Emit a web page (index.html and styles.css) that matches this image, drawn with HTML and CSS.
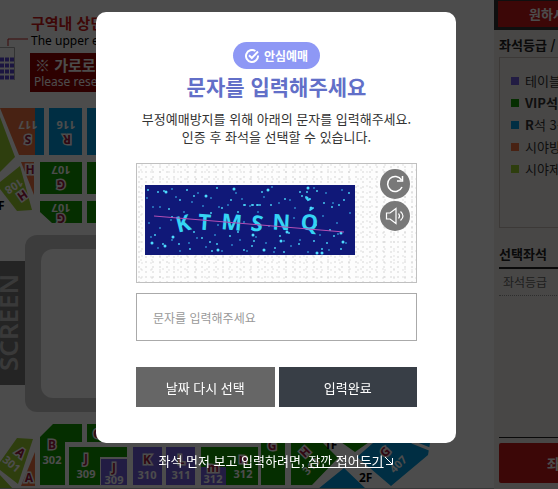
FILE: index.html
```html
<!DOCTYPE html>
<html lang="ko">
<head>
    <meta charset="UTF-8">
    <meta name="viewport" content="width=device-width, initial-scale=1.0">
    <title>좌석 선택</title>

    <link rel="stylesheet" href="styles.css">
</head>
<body>

<div class="booking">
    <!-- Seat map -->
    <main class="seat-map">
        <svg width="494" height="489" viewBox="0 0 494 489" aria-label="좌석 배치도">
            <!-- Top notice -->
            <path d="M8 46V39H28" fill="none" stroke="#c82020"/>
            <path d="M0 47.500H14.500V80" fill="none" stroke="#aaa"/>
            <path d="M0 59.500H15M0 65.500H15M0 71.500H15M0 77.500H15" stroke="#5a48d8" stroke-width="4" stroke-dasharray="4 1"/>
            <text class="notice-title" x="31" y="29">구역내 상단</text>
            <text class="notice-sub" x="31" y="45">The upper end</text>
            <rect x="30" y="53" width="100" height="39" fill="#980000"/>
            <text class="band-title" x="35" y="71">※ 가로로</text>
            <text class="band-sub" x="34" y="86">Please reserve</text>

            <!-- Upper blocks -->
            <path class="lime" d="M0 117L15 157L0 172Z"/>
            <path class="orange" d="M0 108H35V155H19Z"/>
            <path class="blue" d="M35 108H44V155H35ZM49 108H82V155H49ZM87 108H130V155H87Z"/>
            <path class="orange" d="M21 162H34V195Z"/>
            <path class="lime" d="M20 166L32 210L17 211L0 189V182Z"/>
            <path class="green" d="M40 162H82V194H40ZM87 162H130V194H87ZM40 201H82V223H52L40 212ZM87 201H130V223H87Z"/>
            <g class="seat-no">
                <text transform="translate(28 121) rotate(180)">117</text>
                <text transform="translate(66 121) rotate(180)">116</text>
                <text transform="translate(61 166) rotate(180)">107</text>
                <text transform="translate(61 204) rotate(180)">107</text>
                <text transform="translate(12 183) rotate(148)">108</text>
            </g>
            <g class="seat-name">
                <text transform="translate(28 135) rotate(180)">S</text>
                <text transform="translate(67 135) rotate(180)">R</text>
                <text transform="translate(61 180) rotate(180)">G</text>
                <text transform="translate(61 214) rotate(180)">G</text>
                <text x="30" y="174">H</text>
                <text transform="translate(20 192) rotate(145)">H</text>
            </g>
            <text class="floor" x="-2" y="210">F</text>

            <!-- Stage -->
            <rect x="25" y="235" width="420" height="177" rx="12" fill="#cacaca"/>
            <rect x="41" y="249" width="388" height="149" rx="12" fill="#fdfdfd"/>
            <rect x="0" y="261" width="25" height="124" fill="#787878"/>
            <text class="screen" transform="translate(18 371) rotate(-90)">SCREEN</text>

            <!-- Lower blocks -->
            <path class="lime" d="M17 438L33 439L18 484L0 470V462ZM0 475L13 489H0Z"/>
            <path class="orange" d="M35 452V486H21Z"/>
            <path class="green" d="M53 424H82V442H65V485H40V437ZM87 424H130V442H87ZM69 447H127V457H100V485H69ZM201 447H258V485H201ZM261 430H285V485H261ZM291 430H310L338 458L312 485H291ZM338 440H372L355 452Z"/>
            <path class="purple" d="M101 459H127V485H101ZM133 447H162V485H133ZM166 447H195V485H166ZM201 467H226V485H201Z"/>
            <path class="blue" d="M373 443H430L428 455L391 486L357 457ZM318 489L344 468L366 489Z"/>
            <path d="M412 442L432 450" stroke="#fff" stroke-width="3"/>
            <path d="M0 488.500H494" stroke="#bbb"/>
            <g class="seat-no">
                <text transform="translate(9 467) rotate(40)">301</text>
                <text x="52" y="464">302</text>
                <text x="86" y="478">309</text>
                <text x="114" y="484">309</text>
                <text x="147" y="479">310</text>
                <text x="181" y="479">311</text>
                <text x="213" y="483">312</text>
                <text x="243" y="478">312</text>
                <text transform="translate(314 469) rotate(-45)">313</text>
                <text transform="translate(401 467) rotate(-45)">407</text>
            </g>
            <g class="seat-name">
                <text transform="translate(18 456) rotate(40)">A</text>
                <text x="29" y="482">A</text>
                <text x="52" y="449">B</text>
                <text x="97" y="438">C</text>
                <text x="86" y="463">J</text>
                <text x="114" y="472">J</text>
                <text x="147" y="464">K</text>
                <text x="181" y="464">L</text>
                <text x="213" y="472">m</text>
                <text x="243" y="463">n</text>
                <text x="272" y="450">G</text>
                <text transform="translate(308 455) rotate(-45)">H</text>
                <text transform="translate(388 455) rotate(-45)">G</text>
            </g>
            <text class="floor" x="324" y="449">1F</text>
            <text class="floor" x="359" y="482">2F</text>
        </svg>
    </main>

    <!-- Seat grades -->
    <aside class="side">
        <div class="side-top">
            <button class="side-banner" type="button">원하시는 좌석</button>
        </div>
        <div class="side-body">
            <h2 class="side-title">좌석등급 / 잔여석</h2>
            <ul class="grade-list">
                <li><span class="dot dot-purple"></span>테이블석</li>
                <li><span class="dot dot-green"></span><b>VIP석</b></li>
                <li><span class="dot dot-blue"></span><b>R</b>석 3석</li>
                <li><span class="dot dot-orange"></span>시야방해석</li>
                <li><span class="dot dot-lime"></span>시야제한석</li>
            </ul>
            <h2 class="side-title picked-title">선택좌석</h2>
            <div class="picked">
                <p class="picked-head">좌석등급</p>
            </div>
            <button class="side-submit" type="button">좌석선택완료</button>
        </div>
    </aside>
</div>

<div class="overlay">
    <form class="modal">
        <span class="badge">
            <svg width="14" height="14" viewBox="0 0 14 14" fill="none" stroke="#fff" stroke-width="2" aria-hidden="true">
                <path d="M10.400 2A6 6 0 1 0 13 6.500"/>
                <path d="M4 6.200L6.800 9L13 2.500"/>
            </svg>
            안심예매
        </span>
        <h1 class="modal-title">문자를 입력해주세요</h1>
        <p class="modal-text">부정예매방지를 위해 아래의 문자를 입력해주세요.<br>인증 후 좌석을 선택할 수 있습니다.</p>

        <div class="captcha">
            <svg class="captcha-image" width="210" height="70" viewBox="0 0 210 70" role="img" aria-label="보안문자">
                <rect width="210" height="70" fill="#101878"/>
                <g fill="none" stroke-linecap="round">
                    <path stroke="#2c82c8" stroke-width="2" d="M2 13h0M8 22h0M15 22h0M27 4h0M31 12h0M39 27h0M47 17h0M53 8h0M58 21h0M66 13h0M74 22h0M83 20h0M91 8h0M97 14h0M105 21h0M113 27h0M119 12h0M127 2h0M134 18h0M145 15h0M150 23h0M169 3h0M181 8h0M188 18h0M197 5h0M205 28h0M6 52h0M13 63h0M27 55h0M35 66h0M44 58h0M52 53h0M61 62h0M70 50h0M77 66h0M87 60h0M95 55h0M102 66h0M111 52h0M121 58h0M129 67h0M139 56h0M146 61h0M155 55h0M163 67h0M175 50h0M184 65h0M193 49h0M201 58h0M4 38h0M15 43h0M26 35h0M73 40h0M99 37h0M124 41h0M149 33h0M178 31h0M192 38h0"/>
                    <path stroke="#45c8f0" stroke-width="2" d="M3 5h0M13 7h0M19 6h0M24 24h0M35 15h0M42 5h0M49 11h0M72 3h0M86 15h0M93 27h0M99 20h1M107 20h1M112 20h1M115 20h0M126 20h0M117 7h0M140 14h0M155 7h0M157 11h0M162 7h0M172 6h0M179 18h0M187 22h0M194 20h0M199 15h0M204 8h0M66 28h0M77 23h0M27 32h0M10 50h0M18 59h0M34 59h0M49 47h0M57 53h0M65 57h0M72 59h0M85 51h0M93 47h0M109 56h0M107 61h0M130 63h0M135 51h0M144 48h0M169 56h0M177 64h0M182 58h0M189 51h0M196 64h0M154 59h0M45 64h0M67 66h0M99 65h0M139 67h0M171 40h0M185 45h0"/>
                    <path stroke="#4edcff" stroke-width="3" d="M21 7h0M61 11h0M89 4h0M123 5h0M162 13h0M163 3h0M166 23h0M28 52h0M20 61h0M73 65h0M119 65h0M136 56h0M177 68h0M198 57h0M196 48h0M108 50h0M142 47h0M172 68h0M7 58h0"/>
                    <path stroke="#40d0f8" stroke-width="2" d="M161 12l2 3l2-1M165 25l3-2"/>
                </g>
                <g class="captcha-text">
                    <text transform="translate(40 46) rotate(-14)">K</text>
                    <text transform="translate(59 45) rotate(4)">T</text>
                    <text transform="translate(86 45) rotate(5)">M</text>
                    <text transform="translate(111 46) rotate(8)">S</text>
                    <text transform="translate(136 45) rotate(3)">N</text>
                    <text transform="translate(164 45) rotate(4)">Q</text>
                </g>
                <path d="M9 31L199 47" stroke="#b44fb4"/>
            </svg>
            <div class="captcha-tools">
                <button class="round-button" type="button" aria-label="새로고침">
                    <svg width="30" height="30" viewBox="0 0 30 30" fill="none" stroke="#fff" stroke-width="1.500">
                        <path d="M22 18A7.500 7.500 0 1 1 21.500 11"/>
                        <path d="M22.500 7V12H17"/>
                    </svg>
                </button>
                <button class="round-button" type="button" aria-label="음성으로 듣기">
                    <svg width="30" height="30" viewBox="0 0 30 30" fill="none" stroke="#fff" stroke-width="1.200">
                        <path d="M6.500 12H10L16 7.500V22.500L10 18H6.500Z"/>
                        <path d="M18.500 12.500Q20.500 15 18.500 17.500M20.500 10.500Q25.500 15 20.500 19.500"/>
                    </svg>
                </button>
            </div>
        </div>

        <input class="captcha-input" type="text" placeholder="문자를 입력해주세요" aria-label="문자 입력">

        <div class="modal-buttons">
            <button class="modal-button back-button" type="button">날짜 다시 선택</button>
            <button class="modal-button done-button" type="submit">입력완료</button>
        </div>
    </form>

    <p class="fold">좌석 먼저 보고 입력하려면, <a href="#">잠깐 접어두기<svg width="10" height="10" viewBox="0 0 10 10" fill="none" stroke="#fff" aria-hidden="true"><path d="M1 1L8 8M8.500 2V8.500H2"/></svg></a></p>
</div>

</body>
</html>
```
FILE: styles.css
```css
* {
    box-sizing: border-box;
}

body {
    font-family: "Noto Sans CJK KR", "Noto Sans", sans-serif;
    margin: 0;
    color: #333;
    background-color: #fff;
}

h1,
h2,
p,
ul {
    margin: 0;
    padding: 0;
}

button,
input {
    font-family: inherit;
    border: none;
    border-radius: 0;
}

button {
    cursor: pointer;
    padding: 0;
}

.booking {
    display: flex;
    height: 100vh;
    overflow: hidden;
}

/* seat map */
.seat-map {
    flex: 1;
    min-width: 0;
    overflow: hidden;
}

.seat-map svg {
    display: block;
}

.green { fill: #129a00; }
.blue { fill: #009ce0; }
.orange { fill: #f07440; }
.lime { fill: #9cd030; }
.purple { fill: #7460e0; }

.notice-title {
    font-size: 15px;
    font-weight: bold;
    fill: #d01818;
}

.notice-sub,
.band-sub {
    font-family: "Noto Sans", sans-serif;
    font-size: 12px;
    fill: #000;
}

.band-title {
    font-size: 15px;
    font-weight: bold;
    fill: #fff;
}

.band-sub {
    fill: #fff;
}

.seat-no {
    font-family: "Noto Sans", sans-serif;
    font-size: 11px;
    font-weight: bold;
    fill: #fff;
    text-anchor: middle;
}

.seat-name {
    font-family: "Noto Sans", sans-serif;
    font-size: 12px;
    font-weight: bold;
    fill: #a01840;
    stroke: #fff;
    stroke-width: 3px;
    paint-order: stroke;
    text-anchor: middle;
}

.floor {
    font-family: "Noto Sans", sans-serif;
    font-size: 12px;
    font-weight: bold;
    fill: #000;
}

.screen {
    font-family: "Noto Sans", sans-serif;
    font-size: 26px;
    font-weight: 600;
    fill: #c0c0c0;
}

/* right column */
.side {
    display: flex;
    flex-direction: column;
    width: 64px;
    overflow: hidden;
    white-space: nowrap;
    background-color: #f2efeb;
}

.side-top {
    height: 30px;
    padding: 0 0 4px 4px;
    background-color: #333;
}

.side-banner,
.side-submit {
    width: 160px;
    color: #fff;
    font-weight: bold;
    text-align: left;
    background-color: #c81818;
}

.side-banner {
    height: 26px;
    padding-left: 31px;
    font-size: 13px;
}

.side-body {
    display: flex;
    flex: 1;
    flex-direction: column;
    width: 180px;
    padding: 3px 5px 6px;
}

.side-title {
    font-size: 13px;
    line-height: 24px;
    color: #222;
}

.grade-list {
    height: 171px;
    padding: 12px 11px;
    list-style: none;
    font-size: 13px;
    line-height: 22px;
    border: 1px solid #c8c0b8;
}

.grade-list li {
    display: flex;
    align-items: center;
}

.dot {
    width: 8px;
    height: 8px;
    margin-right: 6px;
}

.dot-purple { background-color: #7460e0; }
.dot-green { background-color: #129a00; }
.dot-blue { background-color: #009ce0; }
.dot-orange { background-color: #f07440; }
.dot-lime { background-color: #9cd030; }

.picked-title {
    margin-top: 13px;
    line-height: 26px;
    border-bottom: 2px solid #222;
}

.picked {
    flex: 1;
    margin-bottom: 5px;
    border-bottom: 1px solid #222;
}

.picked-head {
    padding-left: 4px;
    font-size: 12px;
    line-height: 26px;
    color: #666;
    border-bottom: 1px dotted #999;
}

.side-submit {
    height: 40px;
    padding-left: 48px;
    font-size: 14px;
    border-radius: 2px;
}

/* dimmed layer */
.overlay {
    position: fixed;
    top: 0;
    left: 0;
    width: 100%;
    height: 100%;
    display: flex;
    flex-direction: column;
    align-items: center;
    padding: 12px 6px 0 0;
    background-color: rgba(0, 0, 0, 0.7);
}

.modal {
    display: flex;
    flex-direction: column;
    align-items: center;
    width: 360px;
    max-width: 100%;
    padding: 30px 39px 36px 40px;
    background-color: #fff;
    border-radius: 10px;
}

.badge {
    display: flex;
    align-items: center;
    gap: 5px;
    height: 27px;
    padding: 0 12px;
    color: #fff;
    font-size: 12px;
    font-weight: bold;
    background-color: #8e98f5;
    border-radius: 14px;
}

.modal-title {
    margin-top: 2px;
    font-size: 21px;
    line-height: 30px;
    color: #626fc8;
}

.modal-text {
    margin-top: 9px;
    font-size: 13px;
    line-height: 18px;
    text-align: center;
}

.captcha {
    display: flex;
    justify-content: space-between;
    width: 100%;
    height: 120px;
    margin-top: 17px;
    padding: 5px 6px 0 8px;
    border: 1px solid #c0c0c0;
    background-color: #fdfdfd;
    background-image:
        radial-gradient(circle at 2px 3px, #bbb 0, transparent 1px),
        radial-gradient(circle at 5px 1px, #ccc 0, transparent 1px),
        radial-gradient(circle at 4px 6px, #ccc 0, transparent 1px);
    background-size: 7px 5px, 9px 7px, 11px 9px;
}

.captcha-image {
    margin-top: 16px;
}

.captcha-text {
    font-family: "Noto Sans", sans-serif;
    font-size: 22px;
    font-weight: bold;
    fill: #35d4f4;
    text-anchor: middle;
}

.captcha-tools {
    display: flex;
    flex-direction: column;
    gap: 2px;
}

.round-button {
    width: 30px;
    height: 30px;
    background-color: #787878;
    border-radius: 50%;
}

.round-button svg {
    display: block;
}

.captcha-input {
    width: 100%;
    height: 48px;
    margin-top: 10px;
    padding: 0 16px;
    font-size: 12px;
    color: #333;
    background-color: #fff;
    border: 1px solid #aaa;
}

.captcha-input::placeholder {
    color: #999;
}

.modal-buttons {
    display: flex;
    gap: 4px;
    width: 100%;
    margin-top: 26px;
}

.modal-button {
    flex: 1;
    height: 40px;
    font-size: 13px;
    color: #fff;
}

.back-button {
    background-color: #666;
}

.done-button {
    background-color: #383e46;
}

.fold {
    margin-top: 8px;
    font-size: 13px;
    line-height: 19px;
    color: #fff;
}

.fold a {
    color: #fff;
}
```
